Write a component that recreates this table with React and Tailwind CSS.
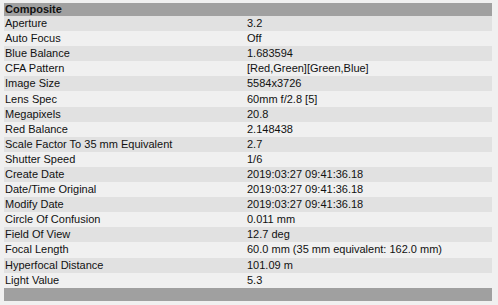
export default function App() {
  const rows = [
    ["Aperture", "3.2"],
    ["Auto Focus", "Off"],
    ["Blue Balance", "1.683594"],
    ["CFA Pattern", "[Red,Green][Green,Blue]"],
    ["Image Size", "5584x3726"],
    ["Lens Spec", "60mm f/2.8 [5]"],
    ["Megapixels", "20.8"],
    ["Red Balance", "2.148438"],
    ["Scale Factor To 35 mm Equivalent", "2.7"],
    ["Shutter Speed", "1/6"],
    ["Create Date", "2019:03:27 09:41:36.18"],
    ["Date/Time Original", "2019:03:27 09:41:36.18"],
    ["Modify Date", "2019:03:27 09:41:36.18"],
    ["Circle Of Confusion", "0.011 mm"],
    ["Field Of View", "12.7 deg"],
    ["Focal Length", "60.0 mm (35 mm equivalent: 162.0 mm)"],
    ["Hyperfocal Distance", "101.09 m"],
    ["Light Value", "5.3"],
  ];
  return (
    <div
      className="w-[498px] h-[305px] bg-[#f0f0f0] text-[11px] text-[#111] overflow-hidden pt-[3px] pl-[4px] pr-[6px]"
      style={{ fontFamily: '"Liberation Sans", Arial, sans-serif' }}
    >
      <div className="h-[13px] bg-[#a0a0a0] flex items-center pl-[1px] font-bold leading-none">
        Composite
      </div>
      {rows.map(([k, v], i) => (
        <div
          key={k}
          className={
            "h-[15.1px] flex items-center leading-none " +
            (i % 2 === 0 ? "bg-[#e1e1e1]" : "bg-[#f0f0f0]")
          }
        >
          <div className="w-[243px] pl-[1px] shrink-0">{k}</div>
          <div>{v}</div>
        </div>
      ))}
      <div className="h-[13px] bg-[#a0a0a0]" />
    </div>
  );
}
